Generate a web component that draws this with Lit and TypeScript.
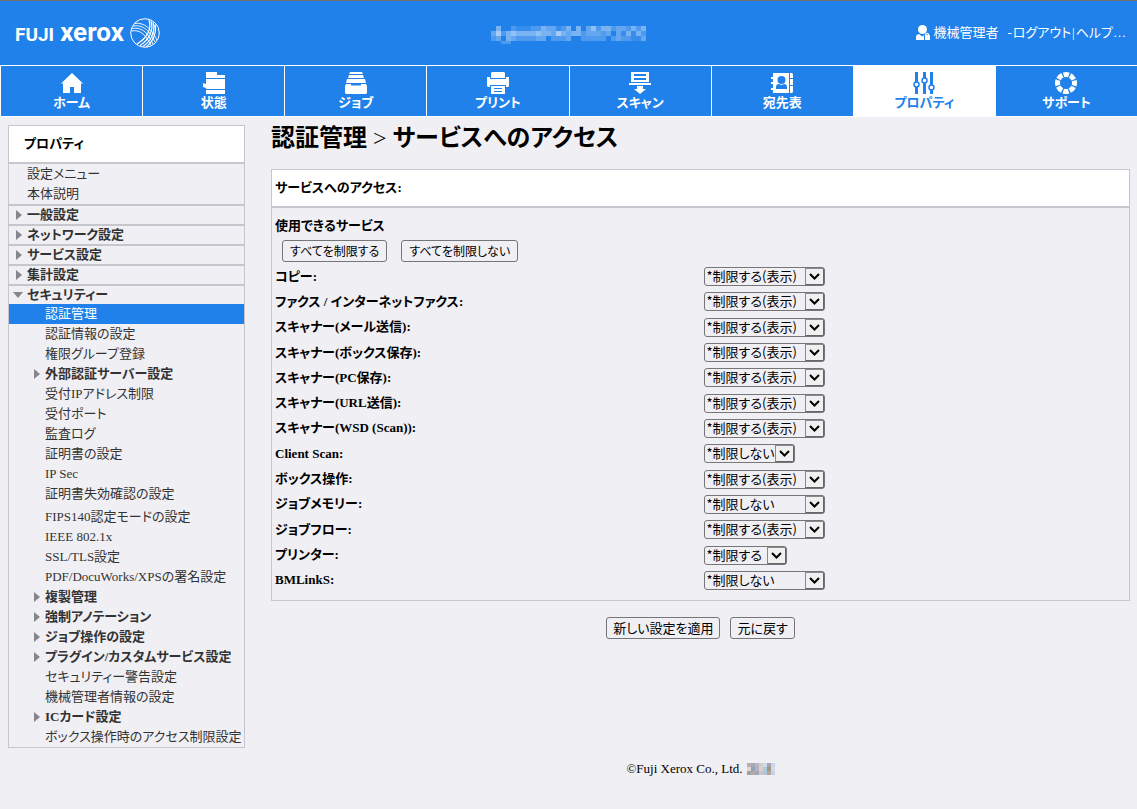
import { LitElement, html, svg, css } from "lit";
import { customElement, property, state } from "lit/decorators.js";
import { classMap } from "lit/directives/class-map.js";

const navIcons: Record<string, unknown> = {
  home: svg`<path d="M11 1 22 11.5H20V21H13V15H9V21H2V11.5H0Z" fill="currentColor"/>`,
  status: svg`<path d="M3 0H14V3H22V6H3ZM3 7H22V17H3V16L0 15V11L3 12ZM3 18H22V22H3Z" fill="currentColor"/>`,
  job: svg`<path d="M5 0H17L18 2H4ZM4 3H18L19 6H3ZM2 7H20L21 11H1ZM1 12H6V13.5H16V12H21L22 14V21L21 22H1L0 21V14Z" fill="currentColor"/>`,
  print: svg`<path fill-rule="evenodd" d="M5 0H17L18 1V6H4V1ZM0 5H3V7H19V5H22V14L21 15H19V13H3V15H1L0 14ZM4 14H18V22H4ZM7 16V17H15V16ZM7 19V20H15V19Z" fill="currentColor"/>`,
  scan: svg`<path fill-rule="evenodd" d="M2 0H20V10H2ZM5 2V4H17V2ZM5 6V8H17V6ZM0 11H22V13H0ZM8 14H14V17H17L11 22 5 17H8Z" fill="currentColor"/>`,
  address: svg`<path d="M2 1H18V21H2V18H0V16H2V12H0V10H2V7H0V5H2ZM19 1H21L22 2V6H19ZM19 7H22V13H19ZM19 14H22V20L21 21H19Z" fill="currentColor"/><circle cx="10.500" cy="8" r="4" fill="#2181ea"/><path d="M5 17V15Q5 12 8 12L10.500 13 13 12Q16 12 16 15V17Z" fill="#2181ea"/>`,
  properties: svg`<g fill="none" stroke="currentColor"><path stroke-width="3" d="M3.500 0V10.500M3.500 15V22M11.500 0V6M11.500 11V22M18.500 0V13M18.500 18V22"/><g stroke-width="1.500"><circle cx="3.500" cy="12.500" r="2.500"/><circle cx="11.500" cy="8.500" r="2.500"/><circle cx="18.500" cy="15.500" r="2.500"/></g></g>`,
  support: svg`<circle cx="11" cy="11" r="8.500" fill="none" stroke="currentColor" stroke-width="5" stroke-dasharray="5.400 1.276" stroke-dashoffset="2.700"/>`,
};

const navItems = [
  ["home", "ホーム"],
  ["status", "状態"],
  ["job", "ジョブ"],
  ["print", "プリント"],
  ["scan", "スキャン"],
  ["address", "宛先表"],
  ["properties", "プロパティ"],
  ["support", "サポート"],
];

type Entry = { text: string; level: 1 | 2; group?: boolean; open?: boolean; current?: boolean; spaced?: boolean };

const menu: Entry[] = [
  { text: "設定メニュー", level: 1 },
  { text: "本体説明", level: 1 },
  { text: "一般設定", level: 1, group: true },
  { text: "ネットワーク設定", level: 1, group: true },
  { text: "サービス設定", level: 1, group: true },
  { text: "集計設定", level: 1, group: true },
  { text: "セキュリティー", level: 1, group: true, open: true },
  { text: "認証管理", level: 2, current: true },
  { text: "認証情報の設定", level: 2 },
  { text: "権限グループ登録", level: 2 },
  { text: "外部認証サーバー設定", level: 2, group: true },
  { text: "受付IPアドレス制限", level: 2 },
  { text: "受付ポート", level: 2 },
  { text: "監査ログ", level: 2 },
  { text: "証明書の設定", level: 2 },
  { text: "IP Sec", level: 2 },
  { text: "証明書失効確認の設定", level: 2 },
  { text: "FIPS140認定モードの設定", level: 2, spaced: true },
  { text: "IEEE 802.1x", level: 2 },
  { text: "SSL/TLS設定", level: 2 },
  { text: "PDF/DocuWorks/XPSの署名設定", level: 2 },
  { text: "複製管理", level: 2, group: true },
  { text: "強制アノテーション", level: 2, group: true },
  { text: "ジョブ操作の設定", level: 2, group: true },
  { text: "プラグイン/カスタムサービス設定", level: 2, group: true },
  { text: "セキュリティー警告設定", level: 2 },
  { text: "機械管理者情報の設定", level: 2 },
  { text: "ICカード設定", level: 2, group: true },
  { text: "ボックス操作時のアクセス制限設定", level: 2 },
];

const SHOW = "*制限する(表示)";
const DENY = "*制限する";
const ALLOW = "*制限しない";

const services: { label: string; value: string; options: string[]; size: string }[] = [
  { label: "コピー:", value: SHOW, options: [SHOW, ALLOW], size: "wide" },
  { label: "ファクス / インターネットファクス:", value: SHOW, options: [SHOW, ALLOW], size: "wide" },
  { label: "スキャナー(メール送信):", value: SHOW, options: [SHOW, ALLOW], size: "wide" },
  { label: "スキャナー(ボックス保存):", value: SHOW, options: [SHOW, ALLOW], size: "wide" },
  { label: "スキャナー(PC保存):", value: SHOW, options: [SHOW, ALLOW], size: "wide" },
  { label: "スキャナー(URL送信):", value: SHOW, options: [SHOW, ALLOW], size: "wide" },
  { label: "スキャナー(WSD (Scan)):", value: SHOW, options: [SHOW, ALLOW], size: "wide" },
  { label: "Client Scan:", value: ALLOW, options: [DENY, ALLOW], size: "medium" },
  { label: "ボックス操作:", value: SHOW, options: [SHOW, ALLOW], size: "wide" },
  { label: "ジョブメモリー:", value: ALLOW, options: [SHOW, ALLOW], size: "wide" },
  { label: "ジョブフロー:", value: SHOW, options: [SHOW, ALLOW], size: "wide" },
  { label: "プリンター:", value: DENY, options: [DENY], size: "narrow" },
  { label: "BMLinkS:", value: ALLOW, options: [SHOW, ALLOW], size: "wide" },
];

// Opacity (0-9) of each white cell in the masked device name.
const deviceMask = [
  "0400211122433124040352442332424",
  "3624544445443643442333230314142",
  "2304322223302223002222202322113",
  "0022000000000000000000000000000",
];

const yearMask = [
  ["#b5b0b8", "#aaa8b0", "#b4b4c2", "#d6cdca", "#ccdbe8", "#a5a3ad", "#c8d5e8"],
  ["#e2d6d3", "#8fa3b5", "#b2b3c7", "#dccfc4", "#a9cce4", "#a19486", "#d0dcec"],
  ["#a3a0aa", "#b6a7a8", "#a2a8b4", "#c8c8cc", "#b0c4d4", "#b0a6a4", "#c9d2e4"],
];

const shared = css`
  * {
    box-sizing: border-box;
  }
  :host {
    font-family: "Liberation Serif", "Noto Sans CJK JP", serif;
    font-size: 13px;
    line-height: 20px;
    font-feature-settings: "palt";
  }
  a {
    color: inherit;
    text-decoration: none;
  }
`;

@customElement("site-header")
class SiteHeader extends LitElement {
  static styles = [
    shared,
    css`
      :host {
        display: block;
        color: #fff;
      }
      .bar {
        display: grid;
        grid-template-columns: 1fr auto 1fr;
        align-items: center;
        height: 65px;
        padding: 0 11px 0 15px;
        border-top: 1px solid #707070;
        background: #2181ea;
      }
      .logo {
        display: flex;
        align-items: center;
        gap: 6px;
        font-family: Roboto, sans-serif;
        font-weight: bold;
      }
      .fuji {
        font-size: 19px;
      }
      .xerox {
        font-size: 26px;
      }
      .brand {
        display: flex;
        align-items: baseline;
        gap: 6px;
      }
      svg {
        display: block;
      }
      .mask {
        margin: 4px 4px 0 0;
      }
      .account {
        display: flex;
        justify-content: flex-end;
        align-items: center;
        white-space: pre;
      }
      .user {
        margin-right: 3px;
      }
      .links {
        display: flex;
        gap: 1px;
        margin-left: 9px;
      }
      .nav {
        display: grid;
        grid-template-columns: repeat(8, 1fr);
        gap: 1px;
        padding: 1px 0 1px 1px;
        background: #fff;
      }
      .tab {
        display: flex;
        flex-direction: column;
        align-items: center;
        height: 50px;
        padding-top: 6px;
        background: #2181ea;
        font-weight: bold;
        line-height: 18px;
      }
      .active {
        background: #fff;
        color: #2181ea;
      }
    `,
  ];

  render() {
    return html`
      <header class="bar">
        <div class="logo">
          <span class="brand"><span class="fuji">FUJI</span><span class="xerox">xerox</span></span>
          <svg width="30" height="30" viewBox="0 0 30 30" fill="none" stroke="#fff" aria-hidden="true">
            <circle cx="15" cy="15" r="14.300" stroke-width="1"/>
            <path stroke-width="0.900" d="M4 5.500C14 4 21 10 27 22M3 8C12 6.500 19 11 25 24M2 10.500C11 9 17 13 23 26M1.500 13C9 11.500 15 15 21 27.500"/>
            <path stroke-width="1.200" d="M19 2C22 11 17 20 7 26M21 3C24 12 19 22 10 27.500M23 4.500C26 13 21 23 13 28.500M25 6.500C27 14 23 24 16 29"/>
          </svg>
        </div>
        <svg class="mask" width="155" height="18" viewBox="0 0 155 18" shape-rendering="crispEdges" aria-hidden="true">
          ${deviceMask.map((row, y) =>
            [...row].map(
              (v, x) => svg`<rect x=${x * 5} y=${y * 5} width="5" height=${y === 3 ? 3 : 5} fill="#fff" fill-opacity=${Number(v) / 10}/>`,
            ),
          )}
        </svg>
        <div class="account">
          <svg class="user" width="14" height="16" viewBox="0 0 14 16" fill="#fff" aria-hidden="true">
            <circle cx="6.500" cy="4.500" r="4.500"/>
            <path d="M0 15V12Q0 9.500 3 9L6 11.500 8 10V15ZM9 10V9Q11.500 6.500 13 9V10H14V15H9Z"/>
            <path d="M10.300 10V9.300H11.900V10Z" fill="#2181ea"/>
          </svg>
          <span>機械管理者</span>
          <span class="links"><span>-</span><a href="#logout">ログアウト</a><span>|</span><a href="#help">ヘルプ…</a></span>
        </div>
      </header>
      <nav class="nav">
        ${navItems.map(
          ([id, label]) => html`
            <a class=${classMap({ tab: true, active: id === "properties" })} href="#${id}">
              <svg width="22" height="22" viewBox="0 0 22 22" aria-hidden="true">${navIcons[id]}</svg>
              <span>${label}</span>
            </a>
          `,
        )}
      </nav>
    `;
  }
}

@customElement("side-menu")
class SideMenu extends LitElement {
  static styles = [
    shared,
    css`
      :host {
        display: block;
        border: 1px solid #c6c6cc;
        color: #333;
      }
      .title {
        margin: 0;
        padding: 8px 15px;
        background: #fff;
        border-bottom: 2px solid #c6c6cc;
        color: #000;
        font-size: 13px;
      }
      .list {
        margin: 0;
        padding: 0;
        list-style: none;
      }
      .item {
        display: flex;
        align-items: center;
        height: 20px;
        padding-left: 4px;
        white-space: nowrap;
      }
      .sub {
        padding-left: 22px;
      }
      .marker {
        width: 14px;
        height: 10px;
        fill: #85858a;
      }
      .group {
        font-weight: bold;
      }
      .section {
        border-top: 2px solid #c6c6cc;
      }
      .current {
        background: #2181ea;
        color: #fff;
      }
      .spaced {
        margin-top: 3px;
      }
    `,
  ];

  render() {
    return html`
      <h2 class="title">プロパティ</h2>
      <ul class="list">
        ${menu.map(
          (e) => html`
            <li
              class=${classMap({
                item: true,
                sub: e.level === 2,
                group: !!e.group,
                section: !!e.group && e.level === 1,
                current: !!e.current,
                spaced: !!e.spaced,
              })}
            >
              <svg class="marker" viewBox="0 0 14 10" aria-hidden="true">
                ${e.group ? (e.open ? svg`<path d="M0 2H10L5 8Z"/>` : svg`<path d="M3 0 9 5 3 10Z"/>`) : ""}
              </svg>
              <a href="#">${e.text}</a>
            </li>
          `,
        )}
      </ul>
    `;
  }
}

@customElement("access-select")
class AccessSelect extends LitElement {
  @property({ attribute: false }) options: string[] = [];
  @property() value = "";
  @property() size = "wide";
  @property() label = "";

  static styles = [
    shared,
    css`
      :host {
        display: block;
      }
      .field {
        position: relative;
        display: block;
        height: 19px;
      }
      .wide {
        width: 121px;
      }
      .medium {
        width: 91px;
      }
      .narrow {
        width: 83px;
      }
      .select {
        display: block;
        width: 100%;
        height: 100%;
        margin: 0;
        padding: 0 0 2px 2px;
        appearance: none;
        border: 1px solid #767679;
        border-radius: 3px;
        background: #f0eff4;
        color: #000;
        font: 13px/15px "Noto Sans CJK JP", sans-serif;
        font-feature-settings: "palt";
      }
      .arrow {
        position: absolute;
        top: 1px;
        right: 1px;
        width: 19px;
        height: 17px;
        background: #f0f0f0;
        border: 1px solid #8a8a8a;
        border-right-color: #666;
        border-bottom-color: #666;
        pointer-events: none;
      }
    `,
  ];

  render() {
    return html`
      <span class="field ${this.size}">
        <select class="select" aria-label=${this.label}>
          ${this.options.map((o) => html`<option ?selected=${o === this.value}>${o}</option>`)}
        </select>
        <svg class="arrow" viewBox="0 0 17 15" aria-hidden="true">
          <path d="M4 5 8.500 9.500 13 5" fill="none" stroke="#000" stroke-width="2"/>
        </svg>
      </span>
    `;
  }
}

@customElement("app-root")
class AppRoot extends LitElement {
  @state() private rows = services;

  static styles = [
    shared,
    css`
      :host {
        display: block;
        min-height: 100vh;
        background: #f0eff4;
        color: #000;
      }
      .layout {
        display: grid;
        grid-template-columns: 237px 1fr;
        align-items: start;
        gap: 26px;
        padding: 8px 7px 8px 8px;
      }
      .heading {
        margin: 0 0 18px;
        font-size: 24px;
        line-height: 26px;
      }
      .arrow {
        font-weight: normal;
      }
      .panel {
        border: 1px solid #c6c6cc;
      }
      .caption {
        margin: 0;
        padding: 8px 3px;
        background: #fff;
        border-bottom: 2px solid #c6c6cc;
        font-size: 13px;
      }
      .body {
        padding: 8px 3px 7px;
      }
      .subtitle {
        margin: 0;
        font-size: 13px;
      }
      .bulk {
        display: flex;
        gap: 14px;
        padding: 4px 7px 2px;
      }
      .button {
        height: 22px;
        margin: 0;
        padding: 0 6px 1px;
        border: 1px solid #767679;
        border-radius: 3px;
        background: #f0eff4;
        color: #000;
        font: 13px/18px "Noto Sans CJK JP", sans-serif;
        font-feature-settings: "palt";
      }
      .bulk .button {
        padding: 0 7px 1px;
        font-size: 12px;
      }
      .services {
        display: grid;
        grid-auto-rows: 1fr;
        min-height: 329px;
      }
      .service {
        display: grid;
        grid-template-columns: 1fr 1fr;
        align-items: center;
        column-gap: 6px;
        font-weight: bold;
      }
      .actions {
        display: flex;
        justify-content: center;
        gap: 10px;
        margin-top: 16px;
      }
      .footer {
        display: flex;
        justify-content: center;
        align-items: center;
        gap: 4px;
        margin-top: 120px;
      }
    `,
  ];

  render() {
    return html`
      <site-header></site-header>
      <div class="layout">
        <side-menu></side-menu>
        <main>
          <h1 class="heading">認証管理 <span class="arrow">&gt;</span> サービスへのアクセス</h1>
          <form>
            <section class="panel">
              <h2 class="caption">サービスへのアクセス:</h2>
              <div class="body">
                <h3 class="subtitle">使用できるサービス</h3>
                <div class="bulk">
                  <button class="button" type="button">すべてを制限する</button>
                  <button class="button" type="button">すべてを制限しない</button>
                </div>
                <div class="services">
                  ${this.rows.map(
                    (s) => html`
                      <div class="service">
                        <span>${s.label}</span>
                        <access-select .options=${s.options} .value=${s.value} .size=${s.size} .label=${s.label}></access-select>
                      </div>
                    `,
                  )}
                </div>
              </div>
            </section>
            <div class="actions">
              <button class="button" type="submit">新しい設定を適用</button>
              <button class="button" type="reset">元に戻す</button>
            </div>
          </form>
          <footer class="footer">
            <span>©Fuji Xerox Co., Ltd.</span>
            <svg width="28" height="12" viewBox="0 0 28 12" shape-rendering="crispEdges" aria-hidden="true">
              ${yearMask.map((row, y) => row.map((c, x) => svg`<rect x=${x * 4} y=${y * 4} width="4" height="4" fill=${c}/>`))}
            </svg>
          </footer>
        </main>
      </div>
    `;
  }
}
